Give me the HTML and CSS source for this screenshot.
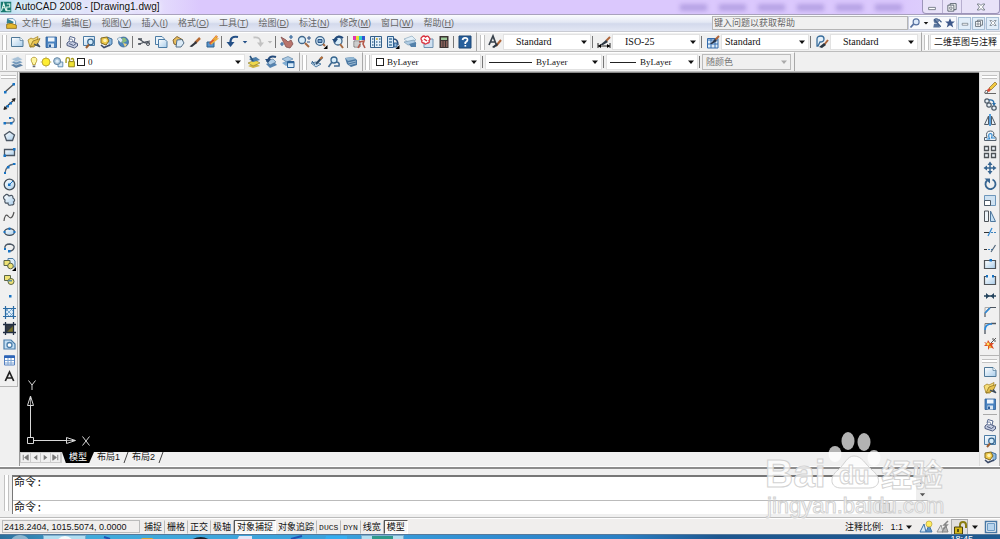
FILE: index.html
```html
<!DOCTYPE html>
<html lang="zh-CN">
<head>
<meta charset="utf-8">
<title>AutoCAD 2008 - [Drawing1.dwg]</title>
<link rel="stylesheet" href="styles.css">
</head>
<body>
<svg class="sprite" aria-hidden="true">
  <defs>
    <linearGradient id="sheet" x1="0" y1="0" x2="1" y2="1"><stop offset="0" stop-color="#fff"/><stop offset="1" stop-color="#a9cdea"/></linearGradient>
  </defs>
  <symbol id="new" viewBox="0 0 16 16"><path d="M2.500 3.500H11L14 6.500V12.500H2.500Z" fill="url(#sheet)" stroke="#4f7898"/><path d="M11 3.500V6.500H14" fill="#fff" stroke="#4f7898" stroke-width=".7"/></symbol>
  <symbol id="open" viewBox="0 0 16 16"><path d="M2 6L5 4L7 5L12 2.500L11 8L8 13H4Z" fill="#f6dd78" stroke="#a5842a" stroke-width=".8"/><path d="M4 13L7 7L14 4.500L11 11Z" fill="#e8c24e" stroke="#8d7220" stroke-width=".8"/><path d="M8 10L13 12.500M11 9.500L14 13" stroke="#3d4d60" stroke-width="1.300"/></symbol>
  <symbol id="save" viewBox="0 0 16 16"><path d="M3 3H13.500V13.500H3Z" fill="#4a83c0" stroke="#2b5d98" stroke-width=".8"/><path d="M5 3.500H11.500V7.500H5Z" fill="#eef5fc"/><path d="M5.500 9.500H11V13.500H5.500Z" fill="#dbe7f3"/><path d="M6 10.500H8V13H6Z" fill="#2b5d98"/></symbol>
  <symbol id="print" viewBox="0 0 16 16"><path d="M5 6L6 2.500L11 4L10 8" fill="#fff" stroke="#57688e"/><path d="M3 9L6 6.500L13.500 9.500V12L10.500 14L3 11.500Z" fill="#c4cce0" stroke="#4f5c80"/><path d="M5 9.500L9.500 11.500L12 9.500" fill="none" stroke="#4f5c80"/><circle cx="7" cy="6.500" r="1.600" fill="#fff" stroke="#57688e" stroke-width=".8"/></symbol>
  <symbol id="preview" viewBox="0 0 16 16"><path d="M2.500 2.500H13.500V11.500H2.500Z" fill="url(#sheet)" stroke="#4c7ca5"/><circle cx="9.500" cy="8" r="2.800" fill="#d4ebfa" stroke="#35658e" stroke-width="1.200"/><path d="M8 10.500L5 14" stroke="#9b5f33" stroke-width="2"/></symbol>
  <symbol id="publish" viewBox="0 0 16 16"><path d="M9 3L14 5V10L11 12" fill="#8cb9df" stroke="#3f6c99"/><path d="M3 4L9 3L11 7L8 11L3 9Z" fill="#efc948" stroke="#806a24"/><circle cx="7" cy="6.500" r="1.800" fill="#fff3b0"/><path d="M3 11L6 13.500L12 11" fill="none" stroke="#3a4968" stroke-width="1.600"/></symbol>
  <symbol id="dwf" viewBox="0 0 16 16"><circle cx="8.500" cy="8" r="5" fill="#4c86bd" stroke="#315e88" stroke-width=".7"/><path d="M5 7Q7 3 10 4L12 7L8 9Z" fill="#8fc07a"/><path d="M2 5L5 3L8 6L6 9Z" fill="#dcebf5" stroke="#6a8ca8" stroke-width=".6"/><path d="M8 9L12 10L10 13Z" fill="#efd27f"/></symbol>
  <symbol id="cut" viewBox="0 0 16 16"><path d="M3 5L9 9H14M3 10L9 8L14 7" fill="none" stroke="#49505a" stroke-width="1.200"/><path d="M2 5H6M2 10H5" stroke="#49505a" stroke-width="1.500"/><circle cx="12" cy="10" r="1.500" fill="none" stroke="#49505a"/></symbol>
  <symbol id="copy" viewBox="0 0 16 16"><path d="M2.500 2.500H9L11 4.500V10.500H2.500Z" fill="#eaf4fb" stroke="#4c7ca5"/><path d="M5.500 5.500H12L14 7.500V13.500H5.500Z" fill="url(#sheet)" stroke="#4c7ca5"/></symbol>
  <symbol id="paste" viewBox="0 0 16 16"><path d="M3 6L7 2.500L13 6L9 12L4 10Z" fill="#e8bd5c" stroke="#866834"/><path d="M7 6L12 5.500L14 9L11 13H6Z" fill="#dcebf7" stroke="#546f87"/></symbol>
  <symbol id="match" viewBox="0 0 16 16"><path d="M13 4L8 9" stroke="#b56b35" stroke-width="2.500"/><path d="M9 7L10 9L5 13L2.500 12.500Z" fill="#30343c"/></symbol>
  <symbol id="bedit" viewBox="0 0 16 16"><path d="M3 8H10V13H3Z" fill="#5795ce" stroke="#2f618d"/><path d="M13 2L6 10" stroke="#d9532b" stroke-width="2.500"/><path d="M13 2L10 5H13L7 10" fill="none" stroke="#ebb03c" stroke-width="1.500"/></symbol>
  <symbol id="undo" viewBox="0 0 16 16"><path d="M13 3Q5 1.500 5.500 9" fill="none" stroke="#234f86" stroke-width="2.200"/><path d="M1.500 8H9.500L5.500 13Z" fill="#234f86"/></symbol>
  <symbol id="redo" viewBox="0 0 16 16"><path d="M3.500 3.500Q11 2.500 10.500 9" fill="none" stroke="#c2c2c2" stroke-width="1.800"/><path d="M7 8.500H14L10.500 13Z" fill="#c2c2c2"/></symbol>
  <symbol id="pan" viewBox="0 0 16 16"><path d="M2 3L7 6L9 8L12 6L14 10L11 14L7 13Z" fill="#b9756d" stroke="#80514f" stroke-width=".8"/><path d="M12 1V5M10 3H14M3 8V12M1 10H5" stroke="#31649b" stroke-width="1.200"/></symbol>
  <symbol id="zoomrt" viewBox="0 0 16 16"><circle cx="6" cy="6" r="3.500" fill="#d9edf9" stroke="#41688d" stroke-width="1.300"/><path d="M9 9L13 13" stroke="#a56a43" stroke-width="2"/><path d="M11 4H15M13 2V6M11 8H14" stroke="#2b5385"/></symbol>
  <symbol id="zoomwin" viewBox="0 0 16 16"><circle cx="7" cy="7" r="4.300" fill="#d9edf9" stroke="#41688d" stroke-width="1.300"/><path d="M5 5.500H9V8.500H5Z" fill="#7ca6ca" stroke="#2b5385"/><path d="M10 10L12 12" stroke="#a56a43" stroke-width="2"/><path d="M14.500 11V15H10.500Z"/></symbol>
  <symbol id="zoomprev" viewBox="0 0 16 16"><circle cx="8" cy="7" r="4" fill="#d9edf9" stroke="#41688d" stroke-width="1.300"/><path d="M10 10L13 14" stroke="#a56a43" stroke-width="2"/><path d="M13 4Q8 0 5 6" fill="none" stroke="#244b7b" stroke-width="2"/><path d="M2 5H8L5 9Z" fill="#244b7b"/></symbol>
  <symbol id="props" viewBox="0 0 16 16"><path d="M2 2H5V6H2Z" fill="#e334ad"/><path d="M5 2H8V6H5Z" fill="#e7df32"/><path d="M8 2H11V6H8Z" fill="#2fcbd0"/><path d="M11 2H14V6H11Z" fill="#3255cf"/><path d="M3 7H9V13H3Z" fill="#fff" stroke="#777"/><path d="M4 9H8M4 11H8" stroke="#999"/><path d="M8 8L13 7L12 10L14 14M9 10L7 14" fill="none" stroke="#b4594a" stroke-width="1.600"/></symbol>
  <symbol id="dcenter" viewBox="0 0 16 16"><path d="M2.500 2.500H13.500V13.500H2.500Z" fill="#e3f0fa" stroke="#35618b"/><path d="M6.500 3V13" stroke="#35618b"/><path d="M4 5H5.500M4 8H5.500M4 11H5.500M8 5H9.500M11 5H12.500M8 8H9.500M11 8H12.500M8 11H9.500M11 11H12.500" stroke="#4d779d" stroke-width="1.600"/><path d="M8 4H9.500V6H8Z" fill="#dbb83f"/></symbol>
  <symbol id="palette" viewBox="0 0 16 16"><path d="M2.500 2.500H8.500V13.500H2.500Z" fill="#d4e8f7" stroke="#2f5f8f"/><path d="M4 5H7M4 8H7M4 11H7" stroke="#47779f" stroke-width="1.500"/><path d="M8.500 5Q13 5 13 11" fill="none" stroke="#2b4f7b" stroke-width="1.500"/><path d="M9 9H12V13H9Z" fill="#8fb9df" stroke="#2f5f8f"/><path d="M14.500 11V15H10.500Z"/></symbol>
  <symbol id="sheets" viewBox="0 0 16 16"><path d="M2 5L10 2L14 6L6 8Z" fill="#e2eff8" stroke="#8da9bf" stroke-width=".7"/><path d="M2 8L12 6L14 10L6 11Z" fill="#afcbe2" stroke="#7d9cb5" stroke-width=".7"/><path d="M7 10L14 8V13H9Z" fill="#5481aa"/></symbol>
  <symbol id="markup" viewBox="0 0 16 16"><path d="M5 5H14V13.500H5Z" fill="#cfe1f1" stroke="#6e91b0"/><path d="M3 3Q5 1 6.500 3Q9 1 10 3.500Q12 5 10 6.500Q11 9 8.500 9Q6 11 5 9Q2 9 3 6.500Q1 4.500 3 3Z" fill="#fff" stroke="#d92e3b" stroke-width="1.300"/><path d="M5 5L8 7" stroke="#d92e3b" stroke-width="1.500"/></symbol>
  <symbol id="calc" viewBox="0 0 16 16"><path d="M3.500 2H12.500V14H3.500Z" fill="#3c3433"/><path d="M5 3.500H11V6H5Z" fill="#9bc697"/><path d="M5 8H11.500M5 10H11.500M5 12H11.500" stroke="#d48c82" stroke-dasharray="1.500 1"/></symbol>
  <symbol id="help" viewBox="0 0 16 16"><path d="M2 2H14V14H2Z" fill="#275f9c" stroke="#1c4774"/><path d="M5.500 6Q6 3.800 8 3.800Q10.700 3.800 10.500 6Q10.200 7.500 8.300 8.500V10" fill="none" stroke="#fff" stroke-width="1.700"/><path d="M7.500 11H9.200V12.600H7.500Z" fill="#fff"/></symbol>
  <symbol id="tstyle" viewBox="0 0 16 16"><path d="M2 11L6 2L9 10M4 8H8" fill="none" stroke="#38424c" stroke-width="1.700"/><path d="M14 6L9 12" stroke="#ae6439" stroke-width="2"/><path d="M10 9L11 11L7 14L5 13Z" fill="#2c3742"/></symbol>
  <symbol id="dimstyle" viewBox="0 0 16 16"><path d="M2 9V14M14 9V14M2 12H14" stroke="#222"/><path d="M2 12L5 10V14ZM14 12L11 10V14Z"/><path d="M14 3L10 7" stroke="#ae6439" stroke-width="2"/><path d="M10 6L12 8L7 11H4Z" fill="#2c3742"/></symbol>
  <symbol id="tabstyle" viewBox="0 0 16 16"><path d="M2.500 4.500H13V14H2.500Z" fill="#dcebf8" stroke="#346cae"/><path d="M3 6H13M3 10H13M6 5V14M10 5V14" stroke="#346cae"/><path d="M14 2L10 6" stroke="#ae6439" stroke-width="2"/><path d="M10 5L12 7L7 10H5Z" fill="#26354c"/></symbol>
  <symbol id="mlstyle" viewBox="0 0 16 16"><path d="M3 12V5Q3 2 7 2Q10 2 10 5Q10 8 6 8L4 12Z" fill="#e3f0fa" stroke="#396d9c" stroke-width="1.300"/><path d="M14 6L10 11" stroke="#ae6439" stroke-width="2"/><path d="M10 9L12 11L8 14L5 13Z" fill="#2c3742"/></symbol>
  <symbol id="layers" viewBox="0 0 16 16"><path d="M2 11L9 8.500L14 11.500L7 14Z" fill="#5d81a5"/><path d="M2 8L9 5.500L14 8.500L7 11Z" fill="#7399bc" stroke="#f0f0f0" stroke-width=".6"/><path d="M2 5L9 2.500L14 5.500L7 8Z" fill="#a8c1d7" stroke="#f0f0f0" stroke-width=".6"/></symbol>
  <symbol id="laycur" viewBox="0 0 16 16"><path d="M2 12L9 9L14 12L7 14Z" fill="#cfb343"/><path d="M2 9L9 6L14 9L7 12Z" fill="#efd84c" stroke="#85752b" stroke-width=".6"/><path d="M3 5L10 3L14 6L7 8Z" fill="#4c7da9"/><path d="M4 2L7 7" stroke="#2b537b" stroke-width="1.500"/></symbol>
  <symbol id="layprev" viewBox="0 0 16 16"><path d="M3 10L10 7L14 11L7 14Z" fill="#5684b1"/><path d="M3 7L10 5L13 8L7 11Z" fill="#b1cee7" stroke="#496f92" stroke-width=".6"/><path d="M13 3Q7 1 5 6" fill="none" stroke="#244b7b" stroke-width="2"/><path d="M2 5H8L5 9Z" fill="#244b7b"/></symbol>
  <symbol id="laystate" viewBox="0 0 16 16"><path d="M2 9L8 6L12 9L6 12Z" fill="#7facd2"/><path d="M2 5L8 2.500L13 5L7 8Z" fill="#a9c8e2" stroke="#4c769c" stroke-width=".6"/><path d="M7.500 7.500H14V13.500H7.500Z" fill="#d8ecfa" stroke="#2c6398"/><path d="M7.500 8.500H14" stroke="#2c6398" stroke-width="1.500"/></symbol>
  <symbol id="bulb" viewBox="0 0 12 16"><path d="M4.500 11Q4.500 9 3.200 7.700Q1.500 3 6 2.500Q10.500 3 8.800 7.700Q7.500 9 7.500 11Z" fill="#fff7a2" stroke="#b59a33"/><path d="M4.500 12H7.500V14H4.500Z" fill="#656a76"/></symbol>
  <symbol id="sun" viewBox="0 0 12 16"><circle cx="6" cy="8" r="4.500" fill="#ffee32" stroke="#b19a2a"/><path d="M1 8H0M12 8H11M6 3V2M6 14V13" stroke="#b19a2a"/></symbol>
  <symbol id="vpfreeze" viewBox="0 0 12 16"><path d="M6 8H11.500V13.500H6Z" fill="#d6e7f4" stroke="#5684ac"/><circle cx="5" cy="7" r="4" fill="#a8c5dc" stroke="#587b9a"/><circle cx="5" cy="7" r="1.800" fill="#e1eef8"/></symbol>
  <symbol id="lock" viewBox="0 0 12 16"><path d="M1.500 9V5Q1.500 3 3.500 3Q5.500 3 5.500 5V7" fill="none" stroke="#a89b1c" stroke-width="1.600"/><path d="M4.500 7.500H11V13.500H4.500Z" fill="#efe234" stroke="#827715"/><path d="M7 5Q9 3 10 5V8" fill="none" stroke="#a89b1c" stroke-width="1.500"/></symbol>
  <symbol id="edpen" viewBox="0 0 16 16"><path d="M2 9L7 13L12 10L7 8Z" fill="#c9def0" stroke="#5783a9"/><path d="M13.500 3L7 10" stroke="#2f4c69" stroke-width="2"/><path d="M13.500 3L11 5" stroke="#bd7137" stroke-width="2"/><path d="M3 7L6 11" stroke="#315e87"/></symbol>
  <symbol id="edmag" viewBox="0 0 16 16"><circle cx="8" cy="6" r="3" fill="#d9edf9" stroke="#35658e" stroke-width="1.300"/><path d="M6 8L2.500 13M10 8Q14 8 13 12H8" fill="none" stroke="#426b91" stroke-width="1.600"/></symbol>
  <symbol id="edset" viewBox="0 0 16 16"><path d="M2 4L10 3L14 6V11L8 13L4 10Z" fill="#4b78a2"/><path d="M2 4L10 3L13 5L5 7Z" fill="#94b8d4"/><path d="M5 9L13 7M6 11L13 9" stroke="#b1cce0" stroke-width=".8"/></symbol>
  <symbol id="line" viewBox="0 0 16 16"><path d="M4 12L13 4" stroke="#555" stroke-width="1.300"/><path d="M3 11H5.500V13.500H3ZM11.500 3H14V5.500H11.500Z" fill="#1773c4"/></symbol>
  <symbol id="xline" viewBox="0 0 16 16"><path d="M3 13L14 3" stroke="#333" stroke-width="1.300"/><path d="M2.500 14L3.500 10L6.500 13ZM14.500 2L10.500 3L13.500 6Z" fill="#222"/><path d="M5.500 9H8V11.500H5.500ZM8.500 6H11V8.500H8.500Z" fill="#1773c4"/></symbol>
  <symbol id="pline" viewBox="0 0 16 16"><path d="M4 11H10Q14 10 13 7Q12 5 9 6" fill="none" stroke="#667483" stroke-width="1.300"/><path d="M2.500 10H5V12.500H2.500ZM9 10H11.500V12.500H9ZM8 5H10V7H8Z" fill="#1773c4"/></symbol>
  <symbol id="polygon" viewBox="0 0 16 16"><path d="M8.500 3.500L13.500 7L11.500 12.500H5.500L3.500 7Z" fill="url(#sheet)" stroke="#4b5663" stroke-width="1.300"/></symbol>
  <symbol id="rect" viewBox="0 0 16 16"><path d="M3.500 5.500H13.500V11.500H3.500Z" fill="url(#sheet)" stroke="#4b5663" stroke-width="1.300"/><path d="M12 4H14.500V6.500H12ZM2.500 10.500H5V13H2.500Z" fill="#1773c4"/></symbol>
  <symbol id="arc" viewBox="0 0 16 16"><path d="M4 13Q5 5 13 4" fill="none" stroke="#5c6a79" stroke-width="1.300"/><path d="M3 12H5V14H3ZM6 6H8.500V8.500H6ZM12 3H14.500V5H12Z" fill="#1773c4"/></symbol>
  <symbol id="circle" viewBox="0 0 16 16"><circle cx="8.500" cy="8.500" r="5.300" fill="url(#sheet)" stroke="#44505c" stroke-width="1.300"/><path d="M8.500 8.500L12 5" stroke="#1773c4"/><path d="M7 7.500H9.500V10H7Z" fill="#1773c4"/></symbol>
  <symbol id="revcloud" viewBox="0 0 16 16"><path d="M4 8Q1 5 4 3.500Q6 1 8 4Q12 2 12 6Q15 8 12.500 10Q14 13 10 13Q7 14 7 11Q3 12 4 8Z" fill="url(#sheet)" stroke="#4b5663" stroke-width="1.200"/></symbol>
  <symbol id="spline" viewBox="0 0 16 16"><path d="M3 13Q4 5 7 8Q11 13 13 4" fill="none" stroke="#555" stroke-width="1.200"/></symbol>
  <symbol id="ellipse" viewBox="0 0 16 16"><ellipse cx="8.500" cy="8" rx="5" ry="3.300" fill="url(#sheet)" stroke="#3f4b58" stroke-width="1.300"/><path d="M7.500 3.500H9.500V6H7.500ZM2.500 7H4.500V9H2.500ZM12.500 7H14.500V9H12.500Z" fill="#1773c4"/></symbol>
  <symbol id="earc" viewBox="0 0 16 16"><path d="M4 9Q3 4 9 4Q14 5 13 8Q12 11 9 11" fill="none" stroke="#4b5663" stroke-width="1.300"/><path d="M3 8H5V10H3ZM7 10H9.500V12.500H7Z" fill="#1773c4"/></symbol>
  <symbol id="insert" viewBox="0 0 16 16"><path d="M7 2.500H12L14 5V11H7Z" fill="#dcecf8" stroke="#4d7da6"/><path d="M3 4.500H9V9.500H3Z" fill="#eee275" stroke="#5b6546"/><circle cx="9.500" cy="10" r="2.800" fill="#eee275" stroke="#5b6546"/><path d="M15 11V15H11Z"/></symbol>
  <symbol id="block" viewBox="0 0 16 16"><path d="M3.500 3.500H9.500V8.500H3.500Z" fill="#eee275" stroke="#5b6546"/><circle cx="10" cy="9.500" r="3" fill="#eee275" stroke="#5b6546"/><path d="M7 8H11V9.500H7Z" fill="#5b8c9d"/></symbol>
  <symbol id="point" viewBox="0 0 16 16"><path d="M8 7H10.500V9.500H8Z" fill="#1773c4"/></symbol>
  <symbol id="hatch" viewBox="0 0 16 16"><path d="M4 4H13V13H4Z" fill="#dfeefa"/><path d="M4 8L8 4M4 12L12 4M8 13L13 8M4 8L9 13M4 4L13 13M9 4L13 8" stroke="#6499c6" stroke-width=".8"/><path d="M4.500 2V15M12.500 2V15M2 4.500H15M2 12.500H15" stroke="#2b6ba4" stroke-width="1.200"/></symbol>
  <symbol id="gradient" viewBox="0 0 16 16"><path d="M4 4H13V13H4Z" fill="#333a43"/><path d="M6 12L12 6V12Z" fill="#776f28"/><path d="M4.500 2V15M12.500 2V15M2 4.500H15M2 12.500H15" stroke="#222e42" stroke-width="1.300"/></symbol>
  <symbol id="region" viewBox="0 0 16 16"><path d="M3 4H10L14 8V13H3Z" fill="#c4dff4" stroke="#4a7daa" stroke-width="1.200"/><circle cx="8.500" cy="9" r="2.500" fill="#fff" stroke="#4a7daa" stroke-width="1.300"/></symbol>
  <symbol id="table" viewBox="0 0 16 16"><path d="M3.500 3.500H13.500V13H3.500Z" fill="#fff" stroke="#5480c0"/><path d="M3 4H14V6H3Z" fill="#2e65b8"/><path d="M4 8.500H13M4 11H13M7 6V13M10 6V13" stroke="#7ca3d2"/></symbol>
  <symbol id="mtext" viewBox="0 0 16 16"><path d="M4.300 13L8.500 4L12.700 13M6 10H11" fill="none" stroke="#222" stroke-width="1.700"/></symbol>
  <symbol id="erase" viewBox="0 0 16 16"><path d="M13 2L15 4L9 10L7 8Z" fill="#f1c941" stroke="#886b25" stroke-width=".7"/><path d="M7 8L9 10L7 12L4 11Z" fill="#d94f38"/><path d="M4 10L6 12L5 13H2.500Z" fill="#fff" stroke="#777"/><path d="M3 13.500H14" stroke="#666"/></symbol>
  <symbol id="mcopy" viewBox="0 0 16 16"><circle cx="5" cy="5" r="2.200" fill="#e5eef5" stroke="#4c5966" stroke-width="1.200"/><circle cx="7" cy="9" r="2.200" fill="#e5eef5" stroke="#4c5966" stroke-width="1.200"/><circle cx="12" cy="12" r="2.200" fill="#e5eef5" stroke="#4c5966" stroke-width="1.200"/><path d="M7 4Q12 3 12 8" fill="none" stroke="#286eab" stroke-width="1.300"/><path d="M10 7H14L12 10Z" fill="#286eab"/></symbol>
  <symbol id="mirror" viewBox="0 0 16 16"><path d="M6.500 4V12.500H2.500ZM9.500 4V12.500H13.500Z" fill="#e8eff5" stroke="#505b66"/><path d="M8 2V14" stroke="#2283d5" stroke-width="1.500"/></symbol>
  <symbol id="offset" viewBox="0 0 16 16"><path d="M2.500 12.500V9.500H5Q3 3 8.500 3Q13 3 11.500 8L14 9.500V12.500Z" fill="#f0f4f8" stroke="#525e6b"/><path d="M4.500 11H7.500Q5.500 5.500 8.500 5.500Q11 6 9.500 10H13" fill="none" stroke="#3189cf" stroke-width="1.200"/></symbol>
  <symbol id="array" viewBox="0 0 16 16"><path d="M2.500 2.500H6.500V6.500H2.500ZM9.500 2.500H13.500V6.500H9.500ZM2.500 9.500H6.500V13.500H2.500ZM9.500 9.500H13.500V13.500H9.500Z" fill="#edf3f8" stroke="#4e5358" stroke-width="1.300"/></symbol>
  <symbol id="move" viewBox="0 0 16 16"><path d="M8 3V13M3 8H13" stroke="#376591" stroke-width="1.500"/><path d="M8 1.500L10.500 5H5.500ZM8 14.500L5.500 11H10.500ZM1.500 8L5 5.500V10.500ZM14.500 8L11 10.500V5.500Z" fill="#376591"/></symbol>
  <symbol id="rotate" viewBox="0 0 16 16"><path d="M5 4.500A5 5 0 1 0 10.500 3.500" fill="none" stroke="#376591" stroke-width="1.800"/><path d="M2.500 2.500H8V7.500Z" fill="#376591"/></symbol>
  <symbol id="scale" viewBox="0 0 16 16"><path d="M2.500 3.500H13.500V13.500H2.500Z" fill="#cfe2f2" stroke="#6d96bb"/><path d="M2.500 8.500H8.500V13.500H2.500Z" fill="#fff" stroke="#4c5966"/></symbol>
  <symbol id="stretch" viewBox="0 0 16 16"><path d="M2.500 3V13.500H6.500V3Z" fill="#edf3f8" stroke="#4e5358"/><path d="M8.500 3V13.500H13.500Z" fill="#c5dff3" stroke="#4d779d"/></symbol>
  <symbol id="trim" viewBox="0 0 16 16"><path d="M2 8.500H7" stroke="#333"/><path d="M9 8.500H14" stroke="#3e83bd" stroke-dasharray="2 1"/><path d="M6 12L10 4" stroke="#3288d2" stroke-width="1.200"/></symbol>
  <symbol id="extend" viewBox="0 0 16 16"><path d="M2 9.500H5" stroke="#333"/><path d="M6 9.500H11" stroke="#3e83bd" stroke-dasharray="2 1"/><path d="M9 12L13.500 5" stroke="#4e6478" stroke-width="1.200"/></symbol>
  <symbol id="breakpt" viewBox="0 0 16 16"><path d="M2.500 4.500H13.500V12.500H2.500Z" fill="url(#sheet)" stroke="#4e5358" stroke-width="1.200"/><path d="M7.500 3H10V5.500H7.500Z" fill="#1773c4"/></symbol>
  <symbol id="break" viewBox="0 0 16 16"><path d="M5 4.500H2.500V12.500H13.500V4.500H11" fill="url(#sheet)" stroke="#4e5358" stroke-width="1.200"/><path d="M4 3H6V5.500H4ZM10 3H12V5.500H10Z" fill="#1773c4"/></symbol>
  <symbol id="join" viewBox="0 0 16 16"><path d="M2 8H14" stroke="#24445e" stroke-width="1.500"/><path d="M7.500 8L4 5V11ZM8.500 8L12 5V11Z" fill="#24445e"/></symbol>
  <symbol id="chamfer" viewBox="0 0 16 16"><path d="M3 13V9L8 3.500H14" fill="none" stroke="#4b5560" stroke-width="1.200"/><path d="M3 9V3.500H8" fill="none" stroke="#aaa"/><path d="M3 9L8 4" stroke="#2989dc" stroke-width="1.500"/></symbol>
  <symbol id="fillet" viewBox="0 0 16 16"><path d="M3 14V10M9 3.500H14" fill="none" stroke="#4b5560" stroke-width="1.300"/><path d="M3 10V3.500H9" fill="none" stroke="#777"/><path d="M3 10Q3 4 10 4" fill="none" stroke="#2989dc" stroke-width="1.700"/></symbol>
  <symbol id="explode" viewBox="0 0 16 16"><path d="M2 6L5 7L6 4L8 7L12 7L10 9L12 13L8 11L6 14L6 10L2 10L4 8Z" fill="#db4c25"/><circle cx="6" cy="8" r="1.500" fill="#ffe15b"/><circle cx="8" cy="11" r="1.200" fill="#f4b52f"/><path d="M9 7L13 3M11 2V4M14 5H12M14 2L12 4" stroke="#555"/></symbol>
  <symbol id="search" viewBox="0 0 16 16"><circle cx="9.500" cy="6.500" r="4" fill="#dce9fa" stroke="#5771a0" stroke-width="1.500"/><path d="M6 9.500L2 14" stroke="#5771a0" stroke-width="2.300"/></symbol>
  <symbol id="comm" viewBox="0 0 16 16"><circle cx="7" cy="5" r="3" fill="#728aae" stroke="#415c85"/><path d="M4 9L10 9L12 14H3Z" fill="#58749d"/><path d="M10 3L14 7M4 3L13 13" stroke="#3f5c88" stroke-width="1.500"/></symbol>
  <symbol id="star" viewBox="0 0 16 16"><path d="M8 1.500L9.900 6H14.500L10.900 9L12.300 14L8 11L3.700 14L5.100 9L1.500 6H6.100Z" fill="#3d578a"/></symbol>
  <symbol id="minimize" viewBox="0 0 16 16"><path d="M3.500 8.500H12.500V11.500H3.500Z" fill="#fff" stroke="#59636e"/></symbol>
  <symbol id="restore" viewBox="0 0 16 16"><path d="M5.500 3.500H13.500V11.500H5.500Z" fill="#fff" stroke="#59636e" stroke-width="1.300"/><path d="M2.500 5.500H10.500V13.500H2.500Z" fill="#fff" stroke="#59636e" stroke-width="1.300"/><path d="M5 8H8V11H5Z" fill="none" stroke="#59636e"/></symbol>
  <symbol id="close" viewBox="0 0 16 16"><path d="M3 4H6L8 6L10 4H13L10 8L13 12H10L8 10L6 12H3L6 8Z" fill="#fff" stroke="#59636e"/></symbol>
  <symbol id="annvis" viewBox="0 0 16 16"><path d="M2 13L6 5L8 13Z" fill="#d7e9f7" stroke="#3d73a8"/><path d="M8 13L11 6L14 13Z" fill="#5e92c6" stroke="#3d73a8"/><circle cx="11" cy="5" r="3" fill="#ffec60" stroke="#b6a138" stroke-width=".7"/></symbol>
  <symbol id="annauto" viewBox="0 0 16 16"><path d="M2 13L6 6L8 13Z" fill="#e2e2e2" stroke="#949494"/><path d="M7 13L11 7L13 13Z" fill="#b5b5b5" stroke="#858585"/><path d="M13 2L9 6H12L8 10" fill="none" stroke="#858585" stroke-width="1.500"/></symbol>
  <symbol id="padlock" viewBox="0 0 16 16"><path d="M8 7V5Q8 2 11 2Q14 2 14 5V8" fill="none" stroke="#8b7d12" stroke-width="2"/><path d="M2.500 7H10.500V14H2.500Z" fill="#d6b91d" stroke="#4b430f"/><path d="M6 9V12" stroke="#332d0b" stroke-width="1.500"/></symbol>
  <symbol id="clean" viewBox="0 0 16 16"><path d="M2.500 2.500H13.500V13.500H2.500Z" fill="#fff" stroke="#4877a4" stroke-width="1.500"/><path d="M4.500 4.500H11.500V11.500H4.500Z" fill="#b7d4ed" stroke="#6c9bc5"/></symbol>
  <symbol id="caret" viewBox="0 0 8 8"><path d="M1 2.500H7L4 6Z" fill="currentColor"/></symbol>
  <symbol id="acad" viewBox="0 0 16 16"><path d="M1 1H15V15H1Z" fill="#17786f"/><path d="M2 13L5 3L8 13M3 9H7M9 4H13V8H9V13H14" fill="none" stroke="#e1f7ef" stroke-width="1.400"/></symbol>
  <symbol id="dwg" viewBox="0 0 16 16"><path d="M3 2H10L13 5V11H3Z" fill="#f8fbff" stroke="#5689af"/><path d="M3 2L11 6L8 9L2 7Z" fill="#358090"/><path d="M2 9Q7 6 14 10V14H2Z" fill="#e5b82c" stroke="#896b21"/></symbol>
</svg>

<header class="titlebar">
  <svg class="app-icon"><use href="#acad"/></svg>
  <h1>AutoCAD 2008 - [Drawing1.dwg]</h1>
  <div class="glass" aria-hidden="true"><i></i><i></i><i></i><i></i><i></i><i></i></div>
  <div class="winbuttons">
    <button aria-label="最小化"><svg><use href="#minimize"/></svg></button>
    <button aria-label="还原"><svg><use href="#restore"/></svg></button>
    <button class="wide" aria-label="关闭"><svg><use href="#close"/></svg></button>
  </div>
</header>

<nav class="menubar">
  <svg class="doc-icon"><use href="#dwg"/></svg>
  <div class="menus">
    <button>文件(<u>F</u>)</button><button>编辑(<u>E</u>)</button><button>视图(<u>V</u>)</button><button>插入(<u>I</u>)</button><button>格式(<u>O</u>)</button><button>工具(<u>T</u>)</button><button>绘图(<u>D</u>)</button><button>标注(<u>N</u>)</button><button>修改(<u>M</u>)</button><button>窗口(<u>W</u>)</button><button>帮助(<u>H</u>)</button>
  </div>
  <input class="ask" type="text" placeholder="键入问题以获取帮助" aria-label="键入问题以获取帮助">
  <div class="info">
    <button aria-label="搜索"><svg><use href="#search"/></svg></button>
    <button class="drop" aria-label="搜索选项"><svg class="caret"><use href="#caret"/></svg></button>
    <button aria-label="通讯中心"><svg><use href="#comm"/></svg></button>
    <button aria-label="收藏夹"><svg><use href="#star"/></svg></button>
  </div>
  <div class="mdi">
    <button aria-label="最小化图形"><svg><use href="#minimize"/></svg></button>
    <button aria-label="还原图形"><svg><use href="#restore"/></svg></button>
    <button aria-label="关闭图形"><svg><use href="#close"/></svg></button>
  </div>
</nav>

<div class="toolrow">
  <div class="band" role="toolbar" aria-label="标准">
    <span class="grip"></span>
    <button class="tool" aria-label="新建"><svg><use href="#new"/></svg></button>
    <button class="tool" aria-label="打开"><svg><use href="#open"/></svg></button>
    <button class="tool" aria-label="保存"><svg><use href="#save"/></svg></button>
    <span class="sep"></span>
    <button class="tool" aria-label="打印"><svg><use href="#print"/></svg></button>
    <button class="tool" aria-label="打印预览"><svg><use href="#preview"/></svg></button>
    <button class="tool" aria-label="发布"><svg><use href="#publish"/></svg></button>
    <button class="tool" aria-label="三维 DWF"><svg><use href="#dwf"/></svg></button>
    <span class="sep"></span>
    <button class="tool" aria-label="剪切"><svg><use href="#cut"/></svg></button>
    <button class="tool" aria-label="复制"><svg><use href="#copy"/></svg></button>
    <button class="tool" aria-label="粘贴"><svg><use href="#paste"/></svg></button>
    <button class="tool" aria-label="特性匹配"><svg><use href="#match"/></svg></button>
    <button class="tool" aria-label="块编辑器"><svg><use href="#bedit"/></svg></button>
    <span class="sep"></span>
    <button class="tool" aria-label="放弃"><svg><use href="#undo"/></svg></button>
    <button class="drop" aria-label="放弃列表"><svg class="caret navy"><use href="#caret"/></svg></button>
    <button class="tool" aria-label="重做" disabled><svg><use href="#redo"/></svg></button>
    <button class="drop" aria-label="重做列表" disabled><svg class="caret faint"><use href="#caret"/></svg></button>
    <span class="sep"></span>
    <button class="tool" aria-label="实时平移"><svg><use href="#pan"/></svg></button>
    <button class="tool" aria-label="实时缩放"><svg><use href="#zoomrt"/></svg></button>
    <button class="tool" aria-label="窗口缩放"><svg><use href="#zoomwin"/></svg></button>
    <button class="tool" aria-label="缩放上一个"><svg><use href="#zoomprev"/></svg></button>
    <span class="sep"></span>
    <button class="tool" aria-label="特性"><svg><use href="#props"/></svg></button>
    <button class="tool" aria-label="设计中心"><svg><use href="#dcenter"/></svg></button>
    <button class="tool" aria-label="工具选项板"><svg><use href="#palette"/></svg></button>
    <button class="tool" aria-label="图纸集管理器"><svg><use href="#sheets"/></svg></button>
    <button class="tool" aria-label="标记集管理器"><svg><use href="#markup"/></svg></button>
    <button class="tool" aria-label="快速计算器"><svg><use href="#calc"/></svg></button>
    <span class="sep"></span>
    <button class="tool" aria-label="帮助"><svg><use href="#help"/></svg></button>
  </div>
  <div class="band styles" role="toolbar" aria-label="样式">
    <span class="grip"></span>
    <button class="tool" aria-label="文字样式"><svg><use href="#tstyle"/></svg></button>
    <div class="combo w-style indent"><select aria-label="文字样式控制"><option>Standard</option></select><svg class="caret"><use href="#caret"/></svg></div>
    <span class="sep"></span>
    <button class="tool" aria-label="标注样式"><svg><use href="#dimstyle"/></svg></button>
    <div class="combo w-style indent"><select aria-label="标注样式控制"><option>ISO-25</option></select><svg class="caret"><use href="#caret"/></svg></div>
    <span class="sep"></span>
    <button class="tool" aria-label="表格样式"><svg><use href="#tabstyle"/></svg></button>
    <div class="combo w-style"><select aria-label="表格样式控制"><option>Standard</option></select><svg class="caret"><use href="#caret"/></svg></div>
    <span class="sep"></span>
    <button class="tool" aria-label="多重引线样式"><svg><use href="#mlstyle"/></svg></button>
    <div class="combo w-style indent"><select aria-label="多重引线样式控制"><option>Standard</option></select><svg class="caret"><use href="#caret"/></svg></div>
  </div>
  <div class="band last">
    <span class="grip"></span>
    <div class="combo workspace"><select aria-label="工作空间"><option>二维草图与注释</option></select></div>
  </div>
</div>

<div class="toolrow">
  <div class="band" role="toolbar" aria-label="图层">
    <span class="grip"></span>
    <button class="tool" aria-label="图层特性管理器"><svg><use href="#layers"/></svg></button>
    <div class="combo w-layer">
      <svg class="state"><use href="#bulb"/></svg><svg class="state"><use href="#sun"/></svg><svg class="state"><use href="#vpfreeze"/></svg><svg class="state"><use href="#lock"/></svg><span class="swatch"></span>
      <select aria-label="图层控制"><option>0</option></select><svg class="caret"><use href="#caret"/></svg>
    </div>
    <button class="tool" aria-label="置为当前图层"><svg><use href="#laycur"/></svg></button>
    <button class="tool" aria-label="上一个图层"><svg><use href="#layprev"/></svg></button>
    <button class="tool" aria-label="图层状态管理器"><svg><use href="#laystate"/></svg></button>
  </div>
  <div class="band" role="toolbar" aria-label="参照编辑">
    <span class="grip"></span>
    <button class="tool" aria-label="编辑参照"><svg><use href="#edpen"/></svg></button>
    <button class="tool" aria-label="查找参照"><svg><use href="#edmag"/></svg></button>
    <button class="tool" aria-label="参照集"><svg><use href="#edset"/></svg></button>
  </div>
  <div class="band" role="toolbar" aria-label="特性">
    <span class="grip"></span>
    <div class="combo w-color"><span class="swatch"></span><select aria-label="颜色控制"><option>ByLayer</option></select><svg class="caret"><use href="#caret"/></svg></div>
    <span class="sep"></span>
    <div class="combo w-ltype"><span class="stroke long"></span><select aria-label="线型控制"><option>ByLayer</option></select><svg class="caret"><use href="#caret"/></svg></div>
    <span class="sep"></span>
    <div class="combo w-lweight"><span class="stroke"></span><select aria-label="线宽控制"><option>ByLayer</option></select><svg class="caret"><use href="#caret"/></svg></div>
    <span class="sep"></span>
    <div class="combo w-plot off"><select aria-label="打印样式控制" disabled><option>随颜色</option></select><svg class="caret"><use href="#caret"/></svg></div>
  </div>
</div>

<main class="workspace-area">
  <aside class="side">
    <div class="column" role="toolbar" aria-label="绘图">
      <span class="hgrip"></span>
      <button class="tool" aria-label="直线"><svg><use href="#line"/></svg></button>
      <button class="tool" aria-label="构造线"><svg><use href="#xline"/></svg></button>
      <button class="tool" aria-label="多段线"><svg><use href="#pline"/></svg></button>
      <button class="tool" aria-label="正多边形"><svg><use href="#polygon"/></svg></button>
      <button class="tool" aria-label="矩形"><svg><use href="#rect"/></svg></button>
      <button class="tool" aria-label="圆弧"><svg><use href="#arc"/></svg></button>
      <button class="tool" aria-label="圆"><svg><use href="#circle"/></svg></button>
      <button class="tool" aria-label="修订云线"><svg><use href="#revcloud"/></svg></button>
      <button class="tool" aria-label="样条曲线"><svg><use href="#spline"/></svg></button>
      <button class="tool" aria-label="椭圆"><svg><use href="#ellipse"/></svg></button>
      <button class="tool" aria-label="椭圆弧"><svg><use href="#earc"/></svg></button>
      <button class="tool" aria-label="插入块"><svg><use href="#insert"/></svg></button>
      <button class="tool" aria-label="创建块"><svg><use href="#block"/></svg></button>
      <button class="tool" aria-label="点"><svg><use href="#point"/></svg></button>
      <button class="tool" aria-label="图案填充"><svg><use href="#hatch"/></svg></button>
      <button class="tool" aria-label="渐变色"><svg><use href="#gradient"/></svg></button>
      <button class="tool" aria-label="面域"><svg><use href="#region"/></svg></button>
      <button class="tool" aria-label="表格"><svg><use href="#table"/></svg></button>
      <button class="tool" aria-label="多行文字"><svg><use href="#mtext"/></svg></button>
    </div>
  </aside>
  <section class="drawing">
    <div class="canvas">
      <svg class="ucs" viewBox="0 0 70 72" role="img" aria-label="UCS">
        <g fill="none" stroke="#d8d8d8"><path d="M3.500 61.500H9.500V67.500H3.500ZM6.500 61V21M10 64.500H51"/><path d="M6.500 20L3.500 29.500H9.500ZM51.500 64.500L42.500 61.500V67.500Z"/><path d="M6.500 23V29M43 64.500H48" stroke="#999"/><path d="M4.500 4.500L8 9L11.500 4.500M8 9V14M58.500 60.500L65.500 69.500M65.500 60.500L58.500 69.500"/></g>
      </svg>
    </div>
    <div class="tabs">
      <div class="pager">
        <button aria-label="第一个"><svg viewBox="0 0 10 10"><path d="M2.500 2V8M8 2V8L4 5Z" stroke="#777"/></svg></button>
        <button aria-label="上一个"><svg viewBox="0 0 10 10"><path d="M7 2V8L3 5Z"/></svg></button>
        <button aria-label="下一个"><svg viewBox="0 0 10 10"><path d="M3 2V8L7 5Z"/></svg></button>
        <button aria-label="最后一个"><svg viewBox="0 0 10 10"><path d="M7.500 2V8M2 2V8L6 5Z" stroke="#777"/></svg></button>
      </div>
      <button class="tab active">模型</button>
      <button class="tab">布局1</button>
      <svg class="slash" viewBox="0 0 6 11"><path d="M1 11L5 0" stroke="#444"/></svg>
      <button class="tab">布局2</button>
      <svg class="slash" viewBox="0 0 6 11"><path d="M1 11L5 0" stroke="#444"/></svg>
    </div>
  </section>
  <aside class="side right">
    <div class="column" role="toolbar" aria-label="修改">
      <span class="hgrip"></span>
      <button class="tool" aria-label="删除"><svg><use href="#erase"/></svg></button>
      <button class="tool" aria-label="复制对象"><svg><use href="#mcopy"/></svg></button>
      <button class="tool" aria-label="镜像"><svg><use href="#mirror"/></svg></button>
      <button class="tool" aria-label="偏移"><svg><use href="#offset"/></svg></button>
      <button class="tool" aria-label="阵列"><svg><use href="#array"/></svg></button>
      <button class="tool" aria-label="移动"><svg><use href="#move"/></svg></button>
      <button class="tool" aria-label="旋转"><svg><use href="#rotate"/></svg></button>
      <button class="tool" aria-label="缩放"><svg><use href="#scale"/></svg></button>
      <button class="tool" aria-label="拉伸"><svg><use href="#stretch"/></svg></button>
      <button class="tool" aria-label="修剪"><svg><use href="#trim"/></svg></button>
      <button class="tool" aria-label="延伸"><svg><use href="#extend"/></svg></button>
      <button class="tool" aria-label="打断于点"><svg><use href="#breakpt"/></svg></button>
      <button class="tool" aria-label="打断"><svg><use href="#break"/></svg></button>
      <button class="tool" aria-label="合并"><svg><use href="#join"/></svg></button>
      <button class="tool" aria-label="倒角"><svg><use href="#chamfer"/></svg></button>
      <button class="tool" aria-label="圆角"><svg><use href="#fillet"/></svg></button>
      <button class="tool" aria-label="分解"><svg><use href="#explode"/></svg></button>
    </div>
    <div class="column" role="toolbar" aria-label="标准注释">
      <span class="hgrip"></span>
      <button class="tool" aria-label="新建"><svg><use href="#new"/></svg></button>
      <button class="tool" aria-label="打开"><svg><use href="#open"/></svg></button>
      <button class="tool" aria-label="保存"><svg><use href="#save"/></svg></button>
      <span class="hsep"></span>
      <button class="tool" aria-label="打印"><svg><use href="#print"/></svg></button>
      <button class="tool" aria-label="打印预览"><svg><use href="#preview"/></svg></button>
      <button class="tool" aria-label="发布"><svg><use href="#publish"/></svg></button>
    </div>
  </aside>
</main>

<section class="command">
  <span class="grip"></span>
  <div class="console">
    <div class="history"><p>命令:</p><div class="vscroll"><svg class="caret up"><use href="#caret"/></svg><svg class="caret"><use href="#caret"/></svg></div></div>
    <div class="prompt"><label for="cmd">命令:</label><input id="cmd" type="text"><div class="hscroll"><i></i></div></div>
  </div>
  <svg class="watermark" viewBox="0 0 184 92" role="img" aria-label="Baidu 经验 jingyan.baidu.com">
    <g class="toes"><ellipse cx="71" cy="24" rx="6.500" ry="8"/><ellipse cx="84" cy="11" rx="6.500" ry="9"/><ellipse cx="100" cy="12" rx="6.500" ry="9"/><ellipse cx="110" cy="28" rx="6.500" ry="8"/></g>
    <g class="mark">
      <text x="1" y="57" class="brand">Bai</text>
      <path d="M90 26C98 26 101 34 108 40C118 48 116 58 105 58H77C66 58 65 47 74 40C81 34 83 26 90 26Z"/>
      <text x="75" y="54" class="pad">du</text>
      <text x="117" y="56" class="cn">经验</text>
      <text x="3" y="83" class="url">jingyan.baidu.com</text>
    </g>
  </svg>
</section>

<footer class="status">
  <output class="coords">2418.2404, 1015.5074, 0.0000</output>
  <div class="modes">
    <button>捕捉</button><button>栅格</button><button>正交</button><button>极轴</button><button class="on" aria-pressed="true">对象捕捉</button><button>对象追踪</button><button class="latin">DUCS</button><button class="latin">DYN</button><button>线宽</button><button class="on" aria-pressed="true">模型</button>
  </div>
  <div class="tray">
    <span>注释比例:</span>
    <button class="ratio">1:1<svg class="caret"><use href="#caret"/></svg></button>
    <button class="tool" aria-label="注释可见性"><svg><use href="#annvis"/></svg></button>
    <button class="tool" aria-label="自动缩放"><svg><use href="#annauto"/></svg></button>
    <button class="tool held" aria-label="锁定"><svg><use href="#padlock"/></svg></button>
    <button class="drop" aria-label="状态栏菜单"><svg class="caret"><use href="#caret"/></svg></button>
    <button class="tool" aria-label="全屏显示"><svg><use href="#clean"/></svg></button>
  </div>
</footer>

<div class="taskbar">
  <span class="orb"><i></i></span>
  <span class="task lit"><i></i></span>
  <svg class="pins" viewBox="0 0 275 5"><path d="M18 2L24 4M205 4L216 1" stroke="#1d52b4" stroke-width="2"/><path d="M56 3H66L69 5H54Z" fill="#d9a63a"/><path d="M105 5Q115 -1 124 5Z" fill="#18202a"/><path d="M153 1H166V5H151Z" fill="#e2e5f6"/><path d="M240 1H261V5H239Z" fill="#35adf0"/></svg>
  <span class="task lit green"><i></i></span>
  <time class="clock">18:45</time>
</div>
</body>
</html>
```

FILE: styles.css
```css
* { box-sizing: border-box; }

body {
  margin: 0;
  height: 100vh;
  display: flex;
  flex-direction: column;
  overflow: hidden;
  background: #f0f0f0;
  color: #111;
  font-family: "Liberation Sans", "Noto Sans CJK SC", sans-serif;
  font-size: 9px;
  line-height: 12px;
}

button, input, select {
  font: inherit;
  color: inherit;
  margin: 0;
  padding: 0;
  border: 0;
  border-radius: 0;
  background: none;
  appearance: none;
}

svg { display: block; flex: none; }
.sprite { position: absolute; width: 0; height: 0; }

/* Title bar */
.titlebar {
  flex: none;
  display: flex;
  align-items: center;
  height: 15px;
  background: linear-gradient(90deg, #bfe2f2 0, #dfe2fa 8%, #e4dcfc 16%, #dbc8fd 20%, #dbc8fd 90%, #e3dcfc 100%);
  border-bottom: 1px solid #a9a2bd;
}
.app-icon { width: 12px; height: 12px; }
.titlebar h1 {
  margin: 0 auto 0 3px;
  font: 10px/14px "Liberation Sans", sans-serif;
  text-shadow: 0 0 5px #fff, 0 0 8px #fff;
  white-space: nowrap;
}
.glass { display: flex; gap: 12px; margin-right: 20px; filter: blur(2px); }
.glass i { width: 27px; height: 7px; background: #b6a2e4; }
.winbuttons {
  align-self: stretch;
  display: flex;
  width: 78px;
  border: 1px solid #9c94ba;
  border-top: 0;
  border-radius: 0 0 4px 4px;
  background: #e8e2f8;
}
.winbuttons button { flex: 1; display: grid; place-items: center; border-right: 1px solid #b7afcf; }
.winbuttons .wide { flex: 2; border: 0; }
.winbuttons svg { width: 12px; height: 12px; }

/* Menu bar */
.menubar {
  flex: none;
  display: flex;
  align-items: center;
  height: 17px;
  padding: 0 1px 0 5px;
  background: linear-gradient(#fbfcfe 0, #e4e8f4 45%, #d3d9ec 55%, #e3e7f4 100%);
  border-bottom: 1px solid #c9cbd3;
}
.doc-icon { width: 13px; height: 13px; }
.menus { display: flex; gap: 10px; margin: 0 auto 0 4px; color: #666; }
.menus button { white-space: nowrap; }
.ask {
  width: 196px;
  height: 14px;
  padding: 0 1px;
  border: 1px solid #b5b5b5;
  background: #f0f0f0;
}
.ask::placeholder { color: #666; opacity: 1; }
.info { display: flex; align-items: center; height: 14px; background: #f8f9fc; border: 1px solid #c9cede; }
.info svg { width: 12px; height: 12px; }
.info button + button { margin-left: 1px; }
.info .drop { width: 8px; }
.info .caret, .drop .caret { width: 6px; height: 6px; }
.mdi { display: flex; gap: 1px; margin-left: 1px; }
.mdi button { display: grid; place-items: center; width: 13px; height: 13px; border: 1px solid #a8bfd5; background: #e2eef9; }
.mdi svg { width: 10px; height: 10px; }

/* Horizontal toolbars */
.toolrow { flex: none; display: flex; height: 20px; overflow: hidden; border-bottom: 1px solid #bdbdbd; }
.band {
  flex: none;
  display: flex;
  align-items: center;
  padding: 0 3px 0 2px;
  border-right: 1px solid #a8a8a8;
  border-top: 1px solid #fff;
}
.grip { flex: none; width: 5px; height: 15px; margin-right: 1px; border: solid #c2c2c2; border-width: 0 1px; background: #fff; }
.sep { flex: none; width: 1px; height: 12px; margin: 0 2px 0 1px; background: #777; }
.tool { flex: none; display: grid; place-items: center; width: 17px; height: 16px; }
.tool svg { width: 16px; height: 16px; }
.drop { flex: none; display: grid; place-items: center; width: 8px; }
.caret { width: 8px; height: 8px; color: #111; }
.navy { color: #234f86; }
.faint { color: #bbb; }

.combo {
  flex: none;
  display: flex;
  align-items: center;
  height: 16px;
  padding: 0 2px 0 3px;
  border: 1px solid #e2e2e2;
  background: #fff;
  font-family: "Liberation Serif", "Noto Sans CJK SC", serif;
}
.combo select { flex: 1; min-width: 0; height: 12px; line-height: 12px; font-size: 9px; }
.styles .combo select { font-size: 10px; }
.styles { padding-left: 3px; }
.indent { padding-left: 12px; }
.w-style { width: 88px; }
.w-layer { width: 220px; padding-left: 2px; }
.w-color { width: 110px; }
.w-ltype { width: 117px; }
.w-lweight { width: 92px; }
.w-plot { width: 89px; }
.off { background: #f0f0f0; border-color: #bbb; color: #777; }
.off select { color: #777; opacity: 1; }
.off .caret { color: #aaa; }
.last { flex: 1; min-width: 0; padding-right: 0; border-right: 0; }
.workspace { flex: 1; min-width: 0; overflow: hidden; padding-right: 0; border-right: 0; }
.workspace select { flex: none; }
.state { width: 12px; height: 14px; }
.swatch { flex: none; width: 8px; height: 8px; margin: 0 3px 0 1px; border: 1px solid #222; background: #fff; }
.stroke { flex: none; width: 26px; height: 1px; margin-right: 4px; background: #222; }
.stroke.long { width: 43px; }

/* Drawing area and side toolbars */
.workspace-area { flex: 1; min-height: 0; display: flex; border-bottom: 1px solid #fff; }
.side { flex: none; width: 20px; overflow: hidden; border-right: 1px solid #999; }
.side.right { width: 21px; border-right: 0; border-left: 1px solid #ddd; }
.column {
  display: flex;
  flex-direction: column;
  align-items: center;
  width: 18px;
  padding: 3px 0 2px;
  border: solid #b5b5b5;
  border-width: 0 1px 1px 0;
}
.right .column { width: 20px; padding-bottom: 3px; }
.hgrip { flex: none; width: 15px; height: 4px; margin-bottom: 1px; border: solid #c2c2c2; border-width: 1px 0; background: #fff; }
.hsep { flex: none; width: 14px; height: 1px; margin: 2px 0; background: #aaa; }
.drawing { flex: 1; min-width: 0; display: flex; flex-direction: column; }
.canvas { flex: 1; min-height: 0; display: flex; align-items: flex-end; padding: 0 4px 8px; background: #000; border-top: 1px solid #888; }
.ucs { width: 70px; height: 72px; margin-bottom: -4px; }

.tabs { flex: none; display: flex; height: 14px; padding-bottom: 3px; }
.pager { display: flex; border: 1px solid #ccc; }
.pager button { width: 10px; border-right: 1px solid #ccc; }
.pager svg { width: 9px; height: 9px; fill: #777; }
.tab { padding: 0 3px; line-height: 11px; height: 11px; }
.tab.active { padding: 0 7px; background: #000; color: #fff; clip-path: polygon(0 0, 100% 0, 85% 100%, 12% 100%); }
.slash { width: 6px; height: 11px; }

/* Command line */
.command {
  position: relative;
  flex: none;
  display: flex;
  padding: 6px 72px 3px 4px;
  border-top: 2px solid #8c8c8c;
  border-bottom: 1px solid #bbb;
}
.command > .grip { height: 36px; margin-right: 3px; }
.console { flex: 1; min-width: 0; border: solid #777; border-width: 2px 0 0 1px; font: 11px/12px "Liberation Mono", "Noto Sans CJK SC", monospace; }
.history, .prompt { display: flex; background: #fff; }
.history { height: 24px; border-bottom: 1px solid #bbb; }
.history p { flex: 1; margin: 0; padding-left: 1px; }
.prompt { height: 13px; align-items: center; padding-left: 1px; }
.prompt input { flex: 1; min-width: 0; height: 12px; }
.vscroll { display: flex; flex-direction: column; justify-content: space-between; align-items: center; width: 12px; padding: 2px 0; background: #eee; }
.vscroll .caret { width: 7px; height: 7px; color: #555; }
.up { transform: rotate(180deg); }
.hscroll { width: 61px; height: 12px; padding: 1px 12px; background: #eee; }
.hscroll i { display: block; width: 11px; height: 10px; background: #ddd; border: 1px solid #bbb; }

.watermark { position: absolute; right: 52px; bottom: -5px; width: 184px; height: 92px; pointer-events: none; }
.toes { fill: #fff; fill-opacity: .7; }
.mark { fill: #fff; fill-opacity: .75; stroke: #d2d2d2; stroke-width: 1; }
.brand { font: bold 39px "Liberation Sans", sans-serif; }
.pad { font: bold 25px "Liberation Sans", sans-serif; }
.cn { font: bold 31px "Noto Sans CJK SC", sans-serif; }
.url { font: 22px "Liberation Sans", sans-serif; }

/* Status bar */
.status {
  flex: none;
  display: flex;
  align-items: center;
  height: 16px;
  padding: 0 1px 0 2px;
  border-top: 1px solid #fff;
  background: #f0eeed;
}
.coords { flex: none; width: 138px; height: 13px; padding-left: 1px; border: 1px solid #bbb; }
.modes { display: flex; margin: 0 auto 0 2px; }
.modes button { height: 14px; padding: 0 2px; border: 1px solid transparent; border-left: 0; border-right-color: #bbb; line-height: 13px; white-space: nowrap; }
.modes .on { border: 1px solid; border-color: #555 #fff #fff #555; background: #f8f7f6; }
.modes .latin { font-family: "Liberation Mono", monospace; font-size: 8px; }
.tray { display: flex; align-items: center; }
.ratio { display: flex; align-items: center; gap: 2px; margin: 0 4px 0 7px; }
.tray .drop { width: 14px; }
.tray .drop .caret { width: 8px; height: 8px; }
.held { border: 1px solid #aaa; background: #e2e0df; }

/* Taskbar */
.taskbar {
  flex: none;
  display: flex;
  height: 5px;
  overflow: hidden;
  border-top: 1px solid #54789b;
  background: linear-gradient(90deg, #2c6f9c 0, #42aada 9%, #3aa0dc 35%, #2f8bd0 50%, #2a7fc4 62%, #1d568f 72%, #1f5a90 100%);
}
.orb { flex: none; width: 43px; padding-left: 9px; }
.orb i { display: block; width: 22px; height: 22px; border-radius: 50%; background: #8db6cf; }
.task { flex: none; width: 43px; border: 1px solid #7aaed0; border-bottom: 0; background: #b4def0; }
.task i { display: block; width: 18px; height: 18px; margin: 0 auto; border-radius: 50%; background: #f4fafc; }
.green i { width: 21px; border-radius: 0; background: #2e9a8c; }
.pins { width: 275px; height: 5px; }
.clock { margin: 0 27px 0 auto; color: #fff; line-height: 9px; }
```
